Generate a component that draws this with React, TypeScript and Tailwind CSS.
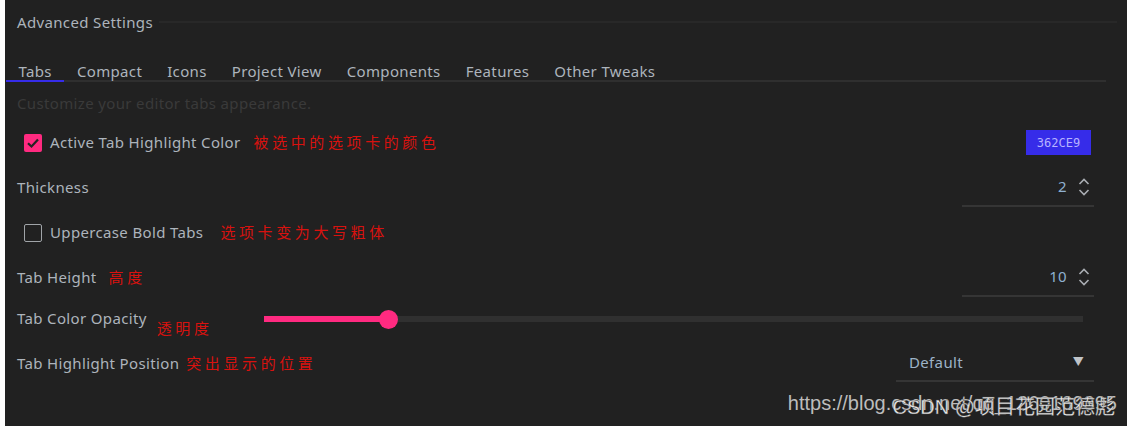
import React, { useState } from "react";

const tabs = ["Tabs", "Compact", "Icons", "Project View", "Components", "Features", "Other Tweaks"];

function Note({ children, className = "" }: { children: React.ReactNode; className?: string }) {
  return (
    <span
      className={`text-[15px] tracking-[3.6px] text-[#d8120f] ${className}`}
      style={{ fontFamily: '"Noto Sans CJK SC", sans-serif' }}
    >
      {children}
    </span>
  );
}

function Spinner() {
  return (
    <svg width="12" height="20" viewBox="0 0 12 20" className="text-[#a9adb2]">
      <path d="M1.5 7 L6 2.5 L10.5 7" fill="none" stroke="currentColor" strokeWidth="1.6" />
      <path d="M1.5 13 L6 17.5 L10.5 13" fill="none" stroke="currentColor" strokeWidth="1.6" />
    </svg>
  );
}

function NumberField({ value }: { value: number }) {
  return (
    <div className="mr-[33px] flex h-[38px] w-[132px] items-center justify-end border-b-2 border-[#353535] pr-[4px]">
      <span className="text-[15px] text-[#8fb0d0]">{value}</span>
      <span className="ml-[11px] flex items-center">
        <Spinner />
      </span>
    </div>
  );
}

function Check({ on, onClick }: { on: boolean; onClick: () => void }) {
  return (
    <button
      onClick={onClick}
      className={`ml-[19px] flex h-[18px] w-[18px] items-center justify-center rounded-[2px] ${
        on ? "bg-[#ff2a80]" : "border-[1.5px] border-[#a0a4a8]"
      }`}
    >
      {on && (
        <svg width="14" height="14" viewBox="0 0 14 14">
          <path d="M2 7.2 L5.5 10.5 L12 3.5" fill="none" stroke="#232323" strokeWidth="2.2" />
        </svg>
      )}
    </button>
  );
}

export default function App() {
  const [active, setActive] = useState("Tabs");
  const [highlight, setHighlight] = useState(true);
  const [upper, setUpper] = useState(false);

  return (
    <div
      className="flex h-[426px] w-[1127px] bg-white text-[#adb4bc] tracking-[0.35px]"
      style={{ fontFamily: '"Noto Sans", "Noto Sans CJK SC", sans-serif' }}
    >
      <div className="relative ml-[5px] flex flex-1 flex-col bg-[#212121]">
        {/* title */}
        <div className="mt-[12px] flex h-[20px] items-center pl-[12px]">
          <span className="text-[15px] leading-[20px]">Advanced Settings</span>
          <div className="ml-[6px] mr-[10px] h-[2px] flex-1 bg-[#282828]" />
        </div>

        {/* tab strip */}
        <div className="mt-[30px] ml-[1px] mr-[21px] flex border-b-2 border-[#2f2f2f]">
          {tabs.map((t) => (
            <button
              key={t}
              onClick={() => setActive(t)}
              className={`-mb-[2px] h-[20px] px-[12.5px] text-[15px] leading-[18px] border-b-2 ${
                active === t ? "border-[#362ce9]" : "border-transparent"
              }`}
            >
              {t}
            </button>
          ))}
        </div>

        <div className="mt-[11px] pl-[12px] text-[15px] leading-[20px] text-[#3a3a3a]">
          Customize your editor tabs appearance.
        </div>

        {/* Active tab highlight colour */}
        <div className="mt-[7px] flex h-[45px] items-center">
          <Check on={highlight} onClick={() => setHighlight(!highlight)} />
          <span className="ml-[8px] text-[15px]">Active Tab Highlight Color</span>
          <Note className="ml-[13px]">被选中的选项卡的颜色</Note>
          <div className="ml-auto mr-[36px] flex h-[25px] w-[65px] items-center justify-center bg-[#362ce9]">
            <span className="text-[12px] tracking-normal text-[#b7b3ff]" style={{ fontFamily: '"DejaVu Sans Mono", monospace' }}>
              362CE9
            </span>
          </div>
        </div>

        {/* Thickness */}
        <div className="flex h-[45px] items-center pl-[12px]">
          <span className="text-[15px]">Thickness</span>
          <div className="ml-auto">
            <NumberField value={2} />
          </div>
        </div>

        {/* Uppercase bold tabs */}
        <div className="flex h-[45px] items-center">
          <Check on={upper} onClick={() => setUpper(!upper)} />
          <span className="ml-[8px] text-[15px]">Uppercase Bold Tabs</span>
          <Note className="ml-[17px]">选项卡变为大写粗体</Note>
        </div>

        {/* Tab height */}
        <div className="flex h-[45px] items-center pl-[12px]">
          <span className="text-[15px]">Tab Height</span>
          <Note className="ml-[12px]">高度</Note>
          <div className="ml-auto">
            <NumberField value={10} />
          </div>
        </div>

        {/* Opacity slider */}
        <div className="flex h-[38px] items-center">
          <div className="flex w-[259px] items-center pl-[12px]">
            <span className="mb-[2px] text-[15px]">Tab Color Opacity</span>
            <Note className="ml-[10px] mt-[18px]">透明度</Note>
          </div>
          <div className="relative mr-[44px] flex h-[18px] flex-1 items-center">
            <div className="h-[6px] w-full bg-[#303030]" />
            <div className="absolute left-0 h-[6px] w-[124px] bg-[#ff2a80]" />
            <div className="absolute left-[115px] h-[19px] w-[19px] rounded-full bg-[#ff2a80]" />
          </div>
        </div>

        {/* Highlight position */}
        <div className="flex h-[50px] items-center pl-[12px]">
          <span className="text-[15px]">Tab Highlight Position</span>
          <Note className="ml-[7px]">突出显示的位置</Note>
          <div className="ml-auto mr-[33px] flex h-[38px] w-[198px] items-center justify-between border-b-2 border-[#353535] pl-[13px] pr-[10px]">
            <span className="text-[15px] text-[#9db3c8]">Default</span>
            <span className="text-[11px] text-[#c0c4c8]">▼</span>
          </div>
        </div>

        {/* watermark */}
        <div
          className="absolute bottom-[11px] right-[10px] text-[20px] leading-[24px] tracking-normal text-[#bcbcbc]"
          style={{ fontFamily: '"Liberation Sans", "Noto Sans CJK SC", sans-serif' }}
        >
          https://blog.csdn.net/qq_1260169395
        </div>
        <div
          className="absolute bottom-[7px] right-[12px] text-[20px] leading-[24px] tracking-normal text-[#e8e8e8]"
          style={{ fontFamily: '"Liberation Sans", "Noto Sans CJK SC", sans-serif', WebkitTextStroke: "0.3px #444" }}
        >
          CSDN @项目花园范德彪
        </div>
      </div>
    </div>
  );
}
